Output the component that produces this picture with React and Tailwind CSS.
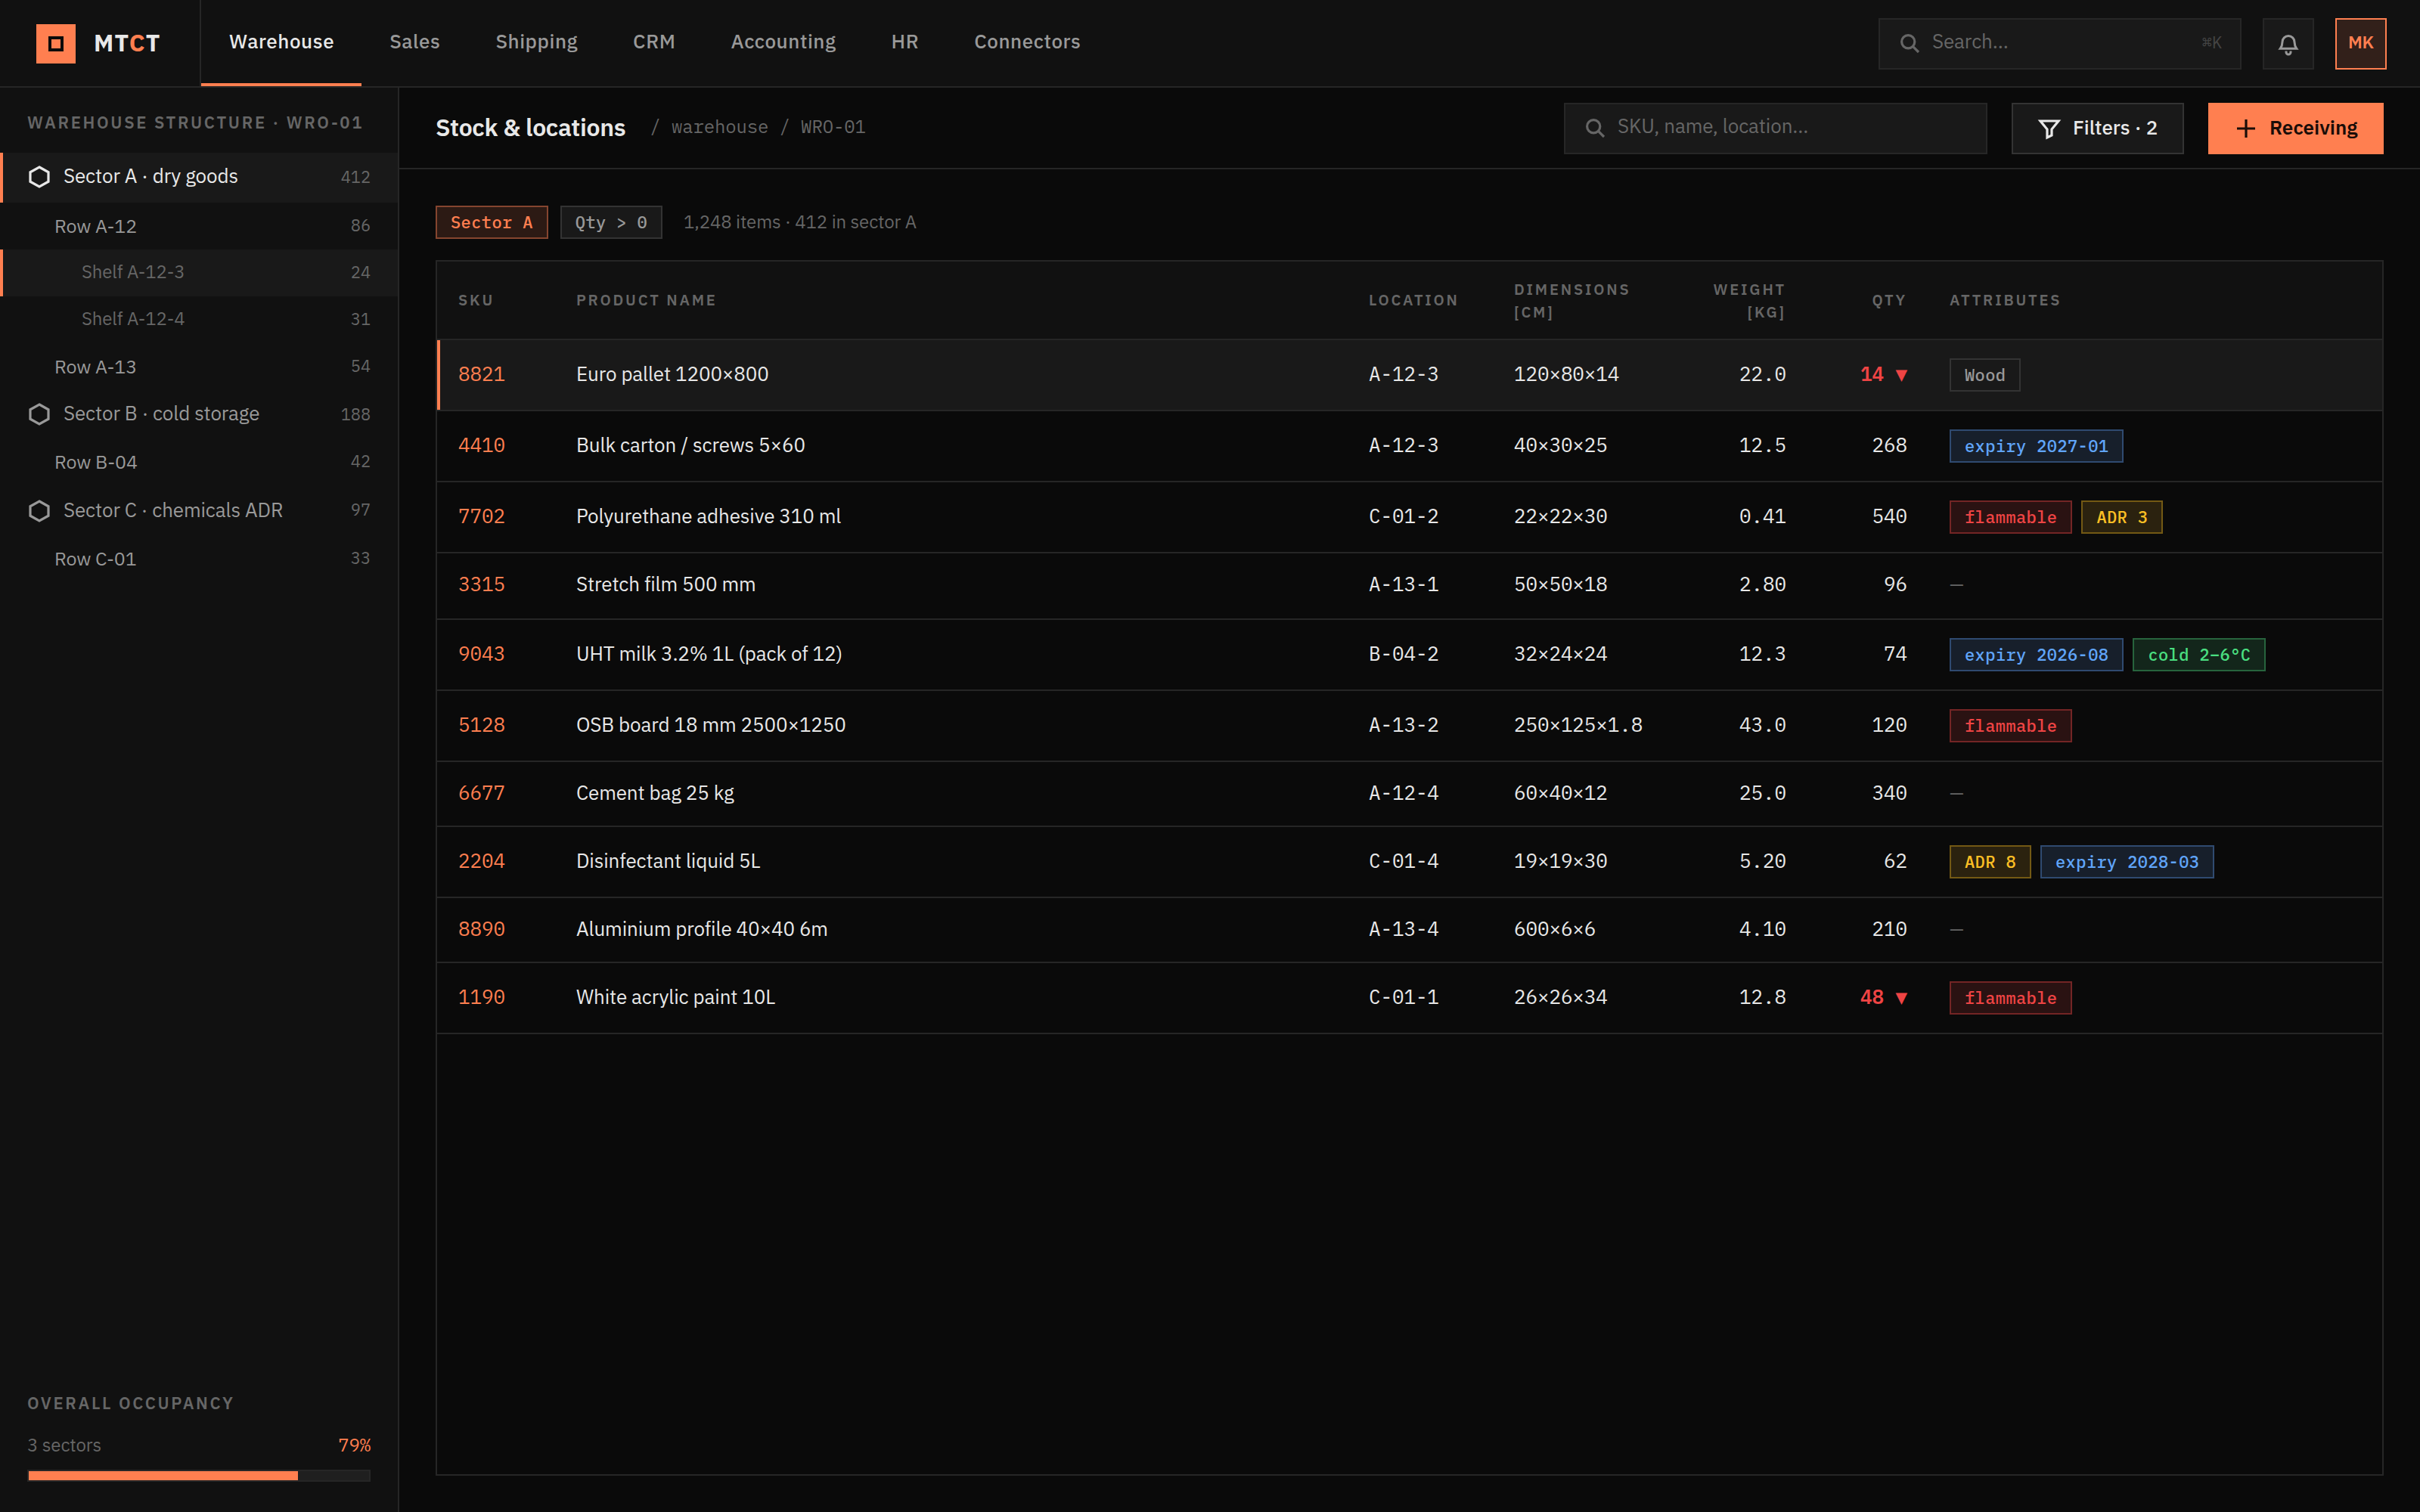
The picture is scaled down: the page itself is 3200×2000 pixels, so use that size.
import React from 'react';
import { clsx } from 'clsx';

const MONO = "font-['IBM_Plex_Mono',monospace]";

const NAV = ['Warehouse', 'Sales', 'Shipping', 'CRM', 'Accounting', 'HR', 'Connectors'];

const TREE = [
  { level: 0, label: 'Sector A · dry goods', count: 412, active: true, box: 'h-[66px] pb-[2px]', countPad: 'pb-px' },
  { level: 1, label: 'Row A-12', count: 86, box: 'h-[62px]' },
  { level: 2, label: 'Shelf A-12-3', count: 24, active: true, box: 'h-[62px]' },
  { level: 2, label: 'Shelf A-12-4', count: 31, box: 'h-[62px]' },
  { level: 1, label: 'Row A-13', count: 54, box: 'h-[62px]' },
  { level: 0, label: 'Sector B · cold storage', count: 188, box: 'h-[64px]', countPad: 'pb-px' },
  { level: 1, label: 'Row B-04', count: 42, box: 'h-[64px] pb-[2px]' },
  { level: 0, label: 'Sector C · chemicals ADR', count: 97, box: 'h-[64px]', countPad: 'pb-[5px]' },
  { level: 1, label: 'Row C-01', count: 33, box: 'h-[62px]' },
];

const CHIP_TONES = {
  neutral: 'bg-[#191919] border-[#333333] text-[#999999]',
  coral: 'bg-[#2c1a14] border-[#85452f] text-[#ff7f50]',
  blue: 'bg-[#171f2b] border-[#2f4a70] text-[#60a5fa]',
  red: 'bg-[#2a1212] border-[#732525] text-[#ef4444]',
  amber: 'bg-[#2b220f] border-[#735914] text-[#fbbf24]',
  green: 'bg-[#13261b] border-[#27643d] text-[#4ade80]',
};

const ROWS = [
  { sku: '8821', name: 'Euro pallet 1200×800', loc: 'A-12-3', dim: '120×80×14', kg: '22.0', qty: '14 ▼', low: true, selected: true, tags: [['neutral', 'Wood']] },
  { sku: '4410', name: 'Bulk carton / screws 5×60', loc: 'A-12-3', dim: '40×30×25', kg: '12.5', qty: '268', tags: [['blue', 'expiry 2027-01']] },
  { sku: '7702', name: 'Polyurethane adhesive 310 ml', loc: 'C-01-2', dim: '22×22×30', kg: '0.41', qty: '540', tags: [['red', 'flammable'], ['amber', 'ADR 3']] },
  { sku: '3315', name: 'Stretch film 500 mm', loc: 'A-13-1', dim: '50×50×18', kg: '2.80', qty: '96', tags: [], box: 'h-[88px] pb-[2px]' },
  { sku: '9043', name: 'UHT milk 3.2% 1L (pack of 12)', loc: 'B-04-2', dim: '32×24×24', kg: '12.3', qty: '74', tags: [['blue', 'expiry 2026-08'], ['green', 'cold 2–6°C']] },
  { sku: '5128', name: 'OSB board 18 mm 2500×1250', loc: 'A-13-2', dim: '250×125×1.8', kg: '43.0', qty: '120', tags: [['red', 'flammable']] },
  { sku: '6677', name: 'Cement bag 25 kg', loc: 'A-12-4', dim: '60×40×12', kg: '25.0', qty: '340', tags: [], box: 'h-[86px]' },
  { sku: '2204', name: 'Disinfectant liquid 5L', loc: 'C-01-4', dim: '19×19×30', kg: '5.20', qty: '62', tags: [['amber', 'ADR 8'], ['blue', 'expiry 2028-03']] },
  { sku: '8890', name: 'Aluminium profile 40×40 6m', loc: 'A-13-4', dim: '600×6×6', kg: '4.10', qty: '210', tags: [], box: 'h-[86px]' },
  { sku: '1190', name: 'White acrylic paint 10L', loc: 'C-01-1', dim: '26×26×34', kg: '12.8', qty: '48 ▼', low: true, tags: [['red', 'flammable']] },
];

const COLS = 'grid grid-cols-[156px_1048px_192px_219px_197px_160px_600px] items-center';

function Icon({ children, className, size = 32, sw = 1.6 }) {
  return (
    <svg width={size} height={size} viewBox="0 0 16 16" fill="none" stroke="currentColor" strokeWidth={sw} className={clsx('block shrink-0', className)}>
      {children}
    </svg>
  );
}

const SearchIcon = () => (
  <Icon className="text-[#666666]">
    <circle cx="6.6" cy="6.6" r="4.3" />
    <path d="M9.7 9.7l3.800 3.800" />
  </Icon>
);

const Hexagon = () => (
  <Icon>
    <path d="M8 1.5l6 3.4v6.2l-6 3.4-6-3.4V4.9z" />
  </Icon>
);

function Chip({ tone, children }) {
  return (
    <span className={clsx(MONO, 'flex h-[44px] items-center border-2 px-[18px] pb-px text-[22px] font-medium leading-[28px] tracking-[0.4px] whitespace-pre', CHIP_TONES[tone])}>
      {children}
    </span>
  );
}

function TopBar() {
  return (
    <header className="flex h-[116px] shrink-0 border-b-2 border-[#262626] bg-[#111111]">
      <div className="flex w-[266px] items-center gap-6 border-r-2 border-[#262626] pt-[2px] pl-12">
        <div className="flex size-[52px] items-center justify-center bg-[#ff7f50]">
          <div className="size-[20px] border-4 border-[#0a0a0a]" />
        </div>
        <span className="pb-1 text-[32px] font-bold leading-[40px] tracking-[0.04em]">
          MT<span className="text-[#ff7f50]">C</span>T
        </span>
      </div>
      <nav className="flex">
        {NAV.map((item, i) => (
          <a key={item} className={clsx('flex items-center border-b-4 pr-9 pb-[2px] pl-[37px] text-[26px] font-medium tracking-[0.55px]', i === 0 ? 'border-[#ff7f50] text-[#e8e8e8]' : 'border-transparent text-[#999999]')}>
            {item}
          </a>
        ))}
      </nav>
      <div className="ml-auto flex items-center gap-7 pt-[2px] pr-[44px]">
        <div className="flex h-[68px] w-[480px] items-center gap-[13px] border-2 border-[#262626] bg-[#191919] px-6">
          <SearchIcon />
          <span className="pb-2 leading-[40px] text-[#666666]">Search...</span>
          <span className={clsx(MONO, 'ml-auto pb-[5px] text-[22px] leading-[33px] text-[#444444]')}>⌘K</span>
        </div>
        <div className="flex size-[68px] items-center justify-center border-2 border-[#262626] bg-[#191919] text-[#999999]">
          <Icon sw={1.5}>
            <path d="M8 2.75a4 4 0 0 0-4 4c0 1.6-.2 2.7-1.4 4.4h10.8C12.200 9.450 12 8.350 12 6.750a4 4 0 0 0-4-4z" />
            <path d="M6.500 12.700v.8a1.500 1.500 0 0 0 3 0v-.8" />
          </Icon>
        </div>
        <div className="flex size-[68px] items-center justify-center border-2 border-[#ff7f50] bg-[#32201a] pb-[5px] text-[23px] font-semibold text-[#ff7f50]">
          MK
        </div>
      </div>
    </header>
  );
}

function TreeItem({ level, label, count, active, box, countPad = 'pb-[3px]' }) {
  return (
    <div
      className={clsx(
        'flex items-center border-l-4 pr-9',
        box,
        active ? 'border-[#ff7f50] bg-[#191919]' : 'border-transparent',
        level === 0 && 'pl-8',
        level === 1 && 'pl-[68px]',
        level === 2 && 'pl-[104px]',
        level === 0 && (active ? 'text-[#e8e8e8]' : 'text-[#999999]'),
        level === 1 && 'text-[#999999]',
        level === 2 && 'text-[#666666]',
      )}
    >
      {level === 0 && (
        <span className="mr-4">
          <Hexagon />
        </span>
      )}
      <span className={clsx(level === 0 && 'pb-1 text-[26px] leading-[40px]', level === 1 && 'pb-px text-[25px] leading-[38px]', level === 2 && 'pb-1 text-[24px] leading-[36px]')}>
        {label}
      </span>
      <span className={clsx('ml-auto text-[22px] leading-[33px] text-[#666666]', countPad)}>{count}</span>
    </div>
  );
}

function Sidebar() {
  return (
    <aside className="flex w-[528px] shrink-0 flex-col border-r-2 border-[#262626] bg-[#111111]">
      <div className="flex h-[86px] shrink-0 items-center px-9 pt-[5px] text-[22px] font-semibold tracking-[0.12em] text-[#666666]">
        WAREHOUSE STRUCTURE · WRO-01
      </div>
      {TREE.map((n) => (
        <TreeItem key={n.label} {...n} />
      ))}
      <div className="mt-auto flex flex-col px-9 pb-10">
        <div className="text-[22px] font-semibold leading-[34px] tracking-[0.12em] text-[#666666]">OVERALL OCCUPANCY</div>
        <div className="mt-[20px] flex justify-between text-[24px] leading-[36px]">
          <span className="text-[#666666]">3 sectors</span>
          <span className={clsx(MONO, 'text-[#ff7f50]')}>79%</span>
        </div>
        <div className="mt-[15px] h-4 border-2 border-[#262626] bg-[#1f1f1f]">
          <div className="h-full w-[79%] bg-[#ff7f50]" />
        </div>
      </div>
    </aside>
  );
}

function TitleBar() {
  return (
    <div className="flex h-[108px] shrink-0 items-center border-b-2 border-[#262626] px-12">
      <h1 className="pb-[2px] text-[32px] font-semibold leading-[48px] tracking-[-0.01em]">Stock &amp; locations</h1>
      <span className={clsx(MONO, 'ml-8 pb-1 text-[24px] leading-[36px] text-[#666666]')}>/ warehouse / WRO-01</span>
      <div className="ml-auto flex gap-8 pt-[2px]">
        <div className="flex h-[68px] w-[560px] items-center gap-[13px] border-2 border-[#262626] bg-[#191919] px-6 text-[#666666]">
          <SearchIcon />
          <span className="pb-2 leading-[40px]">SKU, name, location...</span>
        </div>
        <button className="flex h-[68px] w-[228px] items-center gap-[15px] border-2 border-[#333333] bg-[#191919] pl-8 font-medium tracking-normal whitespace-nowrap">
          <Icon>
            <path d="M2 3h12L9.500 8.500v4l-3 1.500V8.500z" />
          </Icon>
          <span className="pb-1 leading-[40px]">Filters · 2</span>
        </button>
        <button className="flex h-[68px] w-[232px] items-center gap-[15px] bg-[#ff7f50] pl-[34px] font-semibold tracking-normal whitespace-nowrap text-[#1a0d08]">
          <Icon>
            <path d="M8 2v12M2 8h12" />
          </Icon>
          <span className="pb-1 leading-[40px]">Receiving</span>
        </button>
      </div>
    </div>
  );
}

function StockTable() {
  return (
    <div className="mt-7 flex-1 border-2 border-[#262626]">
      <div className={clsx(COLS, 'h-[104px] border-b-2 border-[#262626] bg-[#111111] text-[20px] font-semibold leading-[30px] tracking-[0.14em] text-[#666666]')}>
        <div className="pl-7">SKU</div>
        <div className="pl-7">PRODUCT NAME</div>
        <div className="pl-7">LOCATION</div>
        <div className="pt-px pl-7">
          DIMENSIONS
          <br />
          [CM]
        </div>
        <div className="pt-px pr-7 text-right">
          WEIGHT
          <br />
          [KG]
        </div>
        <div className="pr-7 text-right">QTY</div>
        <div className="pl-7">ATTRIBUTES</div>
      </div>
      {ROWS.map((r) => (
        <div
          key={r.sku}
          className={clsx(COLS, r.box || 'h-[94px]', 'border-b-2 border-[#262626] leading-[40px]', r.selected && 'bg-[#191919] shadow-[inset_4px_0_0_#ff7f50]')}
        >
          <div className={clsx(MONO, 'pb-1 pl-7 text-[#ff7f50]')}>{r.sku}</div>
          <div className="pb-1 pl-7">{r.name}</div>
          <div className={clsx(MONO, 'pb-1 pl-7')}>{r.loc}</div>
          <div className={clsx(MONO, 'pb-1 pl-7')}>{r.dim}</div>
          <div className={clsx(MONO, 'pr-7 pb-1 text-right')}>{r.kg}</div>
          <div className={clsx(MONO, 'pr-7 pb-1 text-right whitespace-pre', r.low && 'font-semibold text-[#ef4444]')}>{r.qty}</div>
          <div className="flex gap-3 pl-7">
            {r.tags.length > 0 ? (
              r.tags.map(([tone, text]) => (
                <Chip key={text} tone={tone}>
                  {text}
                </Chip>
              ))
            ) : (
              <span className="pb-[2px] text-[24px] leading-[36px] text-[#666666]">—</span>
            )}
          </div>
        </div>
      ))}
    </div>
  );
}

export default function App() {
  return (
    <div className="flex h-[2000px] w-[3200px] flex-col overflow-hidden bg-[#0a0a0a] font-['IBM_Plex_Sans','Noto_Sans',sans-serif] text-[26px] tracking-[-0.13px] text-[#e8e8e8]">
      <TopBar />
      <div className="flex min-h-0 flex-1">
        <Sidebar />
        <main className="flex min-w-0 flex-1 flex-col">
          <TitleBar />
          <div className="flex flex-1 flex-col p-12">
            <div className="flex items-center gap-4">
              <Chip tone="coral">Sector A</Chip>
              <Chip tone="neutral">Qty &gt; 0</Chip>
              <span className="ml-3 pb-[2px] text-[24px] leading-[36px] text-[#666666]">1,248 items · 412 in sector A</span>
            </div>
            <StockTable />
          </div>
        </main>
      </div>
    </div>
  );
}
